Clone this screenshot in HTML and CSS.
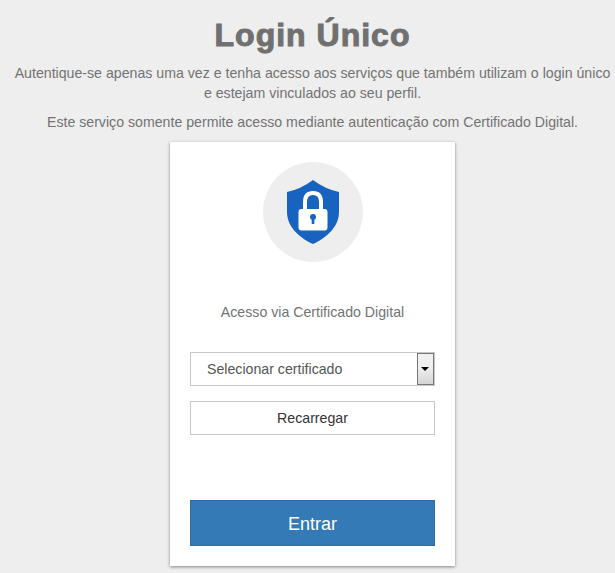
FILE: index.html
```html
<!DOCTYPE html>
<html lang="pt-BR">
<head>
    <meta charset="UTF-8">
    <meta name="viewport" content="width=device-width, initial-scale=1.0">
    <title>Login Único</title>
    <link rel="stylesheet" href="styles.css">
</head>
<body>
    <div class="page">
        <h1>Login Único</h1>
        <p class="intro">Autentique-se apenas uma vez e tenha acesso aos serviços que também utilizam o login único<br>e estejam vinculados ao seu perfil.</p>
        <p class="notice">Este serviço somente permite acesso mediante autenticação com Certificado Digital.</p>
        <div class="card">
            <div class="icon-circle">
                <svg width="54" height="66" viewBox="0 0 54 66">
                    <path d="M27 1 Q39 10 53 13 V33 C53 47 42 58 27 65 C12 58 1 47 1 33 V13 Q15 10 27 1 Z" fill="#1763bf"/>
                    <path d="M19 32 V23 C19 17 22 14 27 14 C32 14 35 17 35 23 V32" fill="none" stroke="#fff" stroke-width="4"/>
                    <rect x="12.5" y="30" width="29" height="21.5" rx="3" fill="#fff"/>
                    <circle cx="27" cy="38" r="3" fill="#1763bf"/>
                    <rect x="25.7" y="39" width="2.6" height="6" fill="#1763bf"/>
                </svg>
            </div>
            <p class="card-label">Acesso via Certificado Digital</p>
            <div class="select-wrap">
                <select class="cert-select">
                    <option>Selecionar certificado</option>
                </select>
                <span class="select-arrow"></span>
            </div>
            <button type="button" class="btn-reload">Recarregar</button>
            <button type="button" class="btn-enter">Entrar</button>
        </div>
    </div>
</body>
</html>
```

FILE: styles.css
```css
html, body {
    margin: 0;
    height: 100%;
    overflow: hidden;
}
body {
    font-family: "Liberation Sans", Arial, sans-serif;
    background-color: #eeeeee;
    color: #737373;
}
.page {
    display: flex;
    flex-direction: column;
    align-items: center;
    padding-left: 10px;
    text-align: center;
}
h1 {
    margin: 16px 0 0;
    font-size: 32px;
    line-height: 38px;
    letter-spacing: 1px;
    color: #707070;
    -webkit-text-stroke: 1px #707070;
}
.intro {
    margin: 9px 0 0;
    font-size: 14.17px;
    line-height: 20px;
}
.notice {
    margin: 9px 0 0;
    font-size: 14.17px;
    line-height: 20px;
}
.card {
    box-sizing: border-box;
    width: 285px;
    height: 424px;
    margin-top: 10px;
    padding: 20px;
    display: flex;
    flex-direction: column;
    align-items: center;
    background-color: #fff;
    box-shadow: 0 1px 3px rgba(0, 0, 0, 0.45);
}
.icon-circle {
    width: 100px;
    height: 100px;
    flex: none;
    border-radius: 50%;
    background-color: #eeeeee;
    display: flex;
    align-items: center;
    justify-content: center;
}
.card-label {
    margin: 40px 0 0;
    font-size: 14.17px;
    line-height: 20px;
}
.select-wrap {
    position: relative;
    width: 245px;
    height: 34px;
    margin-top: 30px;
}
.cert-select {
    appearance: none;
    width: 100%;
    height: 100%;
    padding: 0 0 0 16px;
    border: 1px solid #c8c8c8;
    border-radius: 0;
    background-color: #fff;
    color: #555;
    font-family: inherit;
    font-size: 14.17px;
}
.select-arrow {
    position: absolute;
    top: 1px;
    right: 1px;
    box-sizing: border-box;
    width: 17px;
    height: 32px;
    border: 1px solid #777;
    background: linear-gradient(#f0f0f0, #f0f0f0 45%, #d4d4d4);
}
.select-arrow::after {
    content: "";
    position: absolute;
    top: 13px;
    left: 3px;
    border-top: 4px solid #000;
    border-left: 4px solid transparent;
    border-right: 4px solid transparent;
}
.btn-reload {
    width: 245px;
    height: 34px;
    flex: none;
    margin-top: 15px;
    border: 1px solid #c8c8c8;
    background-color: #fff;
    color: #333;
    font-family: inherit;
    font-size: 14.17px;
}
.btn-enter {
    width: 245px;
    height: 46px;
    flex: none;
    margin-top: 65px;
    padding: 2px 0 0;
    border: 1px solid #2e6da4;
    background-color: #337ab7;
    color: #fff;
    font-family: inherit;
    font-size: 18px;
}
```
